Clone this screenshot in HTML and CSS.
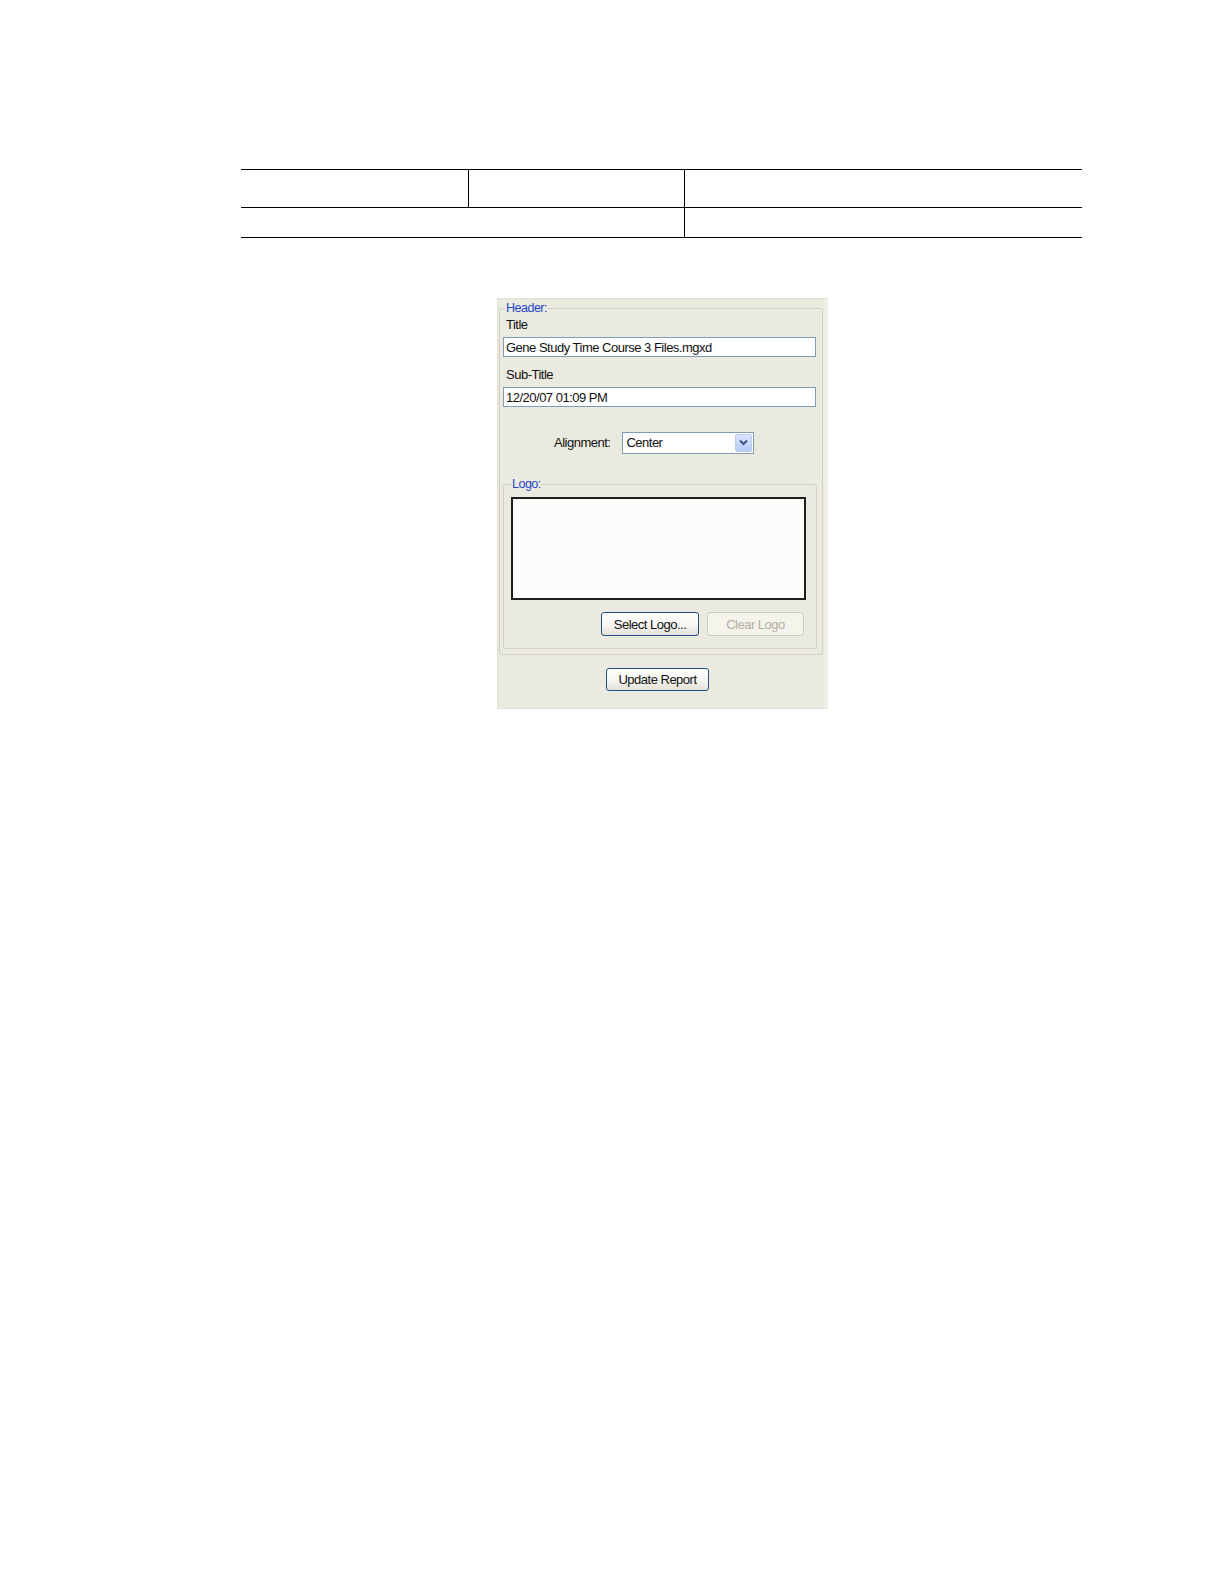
FILE: index.html
```html
<!DOCTYPE html>
<html lang="en">
<head>
<meta charset="utf-8">
<title>Report Header Settings</title>
<link rel="stylesheet" href="styles.css">
</head>
<body>
<div class="page">
  <div class="spec">
    <div class="cell"></div>
    <div class="cell vline"></div>
    <div class="cell vline"></div>
    <div class="cell row2 span2"></div>
    <div class="cell row2 vline"></div>
  </div>

  <div class="panel">
    <fieldset class="group header-group">
      <legend class="legend">Header:</legend>
      <div class="header-body">
        <label class="field-label" for="title">Title</label>
        <input class="text-input" id="title" type="text" value="Gene Study Time Course 3 Files.mgxd">
        <label class="field-label sub" for="subtitle">Sub-Title</label>
        <input class="text-input" id="subtitle" type="text" value="12/20/07 01:09 PM">
        <div class="align-row">
          <span class="align-label">Alignment:</span>
          <div class="combo">
            <span class="combo-text">Center</span>
            <span class="combo-btn">
              <svg width="9" height="7" viewBox="0 0 9 7"><path d="M1 1.5 L4.5 5 L8 1.5" fill="none" stroke="#3d5688" stroke-width="2"/></svg>
            </span>
          </div>
        </div>
        <fieldset class="group logo-group">
          <legend class="legend logo-legend">Logo:</legend>
          <div class="logo-body">
            <div class="logo-box"></div>
            <div class="logo-buttons">
              <button class="xp-btn select-btn" type="button">Select Logo...</button>
              <button class="xp-btn clear-btn" type="button" disabled>Clear Logo</button>
            </div>
          </div>
        </fieldset>
      </div>
    </fieldset>
    <div class="footer">
      <button class="xp-btn update-btn" type="button">Update Report</button>
    </div>
  </div>
</div>
</body>
</html>
```

FILE: styles.css
```css
html, body {
  margin: 0;
  padding: 0;
  background: #ffffff;
}

.page {
  padding-top: 169px;
  padding-left: 241px;
  font-family: "Liberation Sans", Arial, sans-serif;
}

.spec {
  display: grid;
  grid-template-columns: 227px 216px 398px;
  grid-template-rows: 37px 30px;
  width: 841px;
  border-top: 1px solid #000;
  border-bottom: 1px solid #000;
  box-sizing: content-box;
}

.cell {
  box-sizing: border-box;
}

.vline {
  border-left: 1px solid #000;
}

.row2 {
  border-top: 1px solid #000;
}

.span2 {
  grid-column: span 2;
}

/* dialog panel */
.panel {
  width: 331px;
  height: 411px;
  box-sizing: border-box;
  margin-top: 60px;
  margin-left: 256px;
  padding: 1px 4px 0 1px;
  background: #ebeae0;
  border: 1px solid #e2e0d4;
  border-right: 1px solid #f3f2ec;
  box-shadow: inset -3px 0 0 #f0efe7;
  font-size: 13px;
  letter-spacing: -0.5px;
  color: #111;
}

.group {
  margin: 0;
  padding: 0;
  border: 1px solid #d3d1c3;
  border-radius: 3px;
  min-width: 0;
}

.legend {
  margin-left: 5px;
  padding: 0 1px;
  font-size: 12.5px;
  line-height: 16px;
  color: #1f45c8;
}

.header-group {
  width: 324px;
  box-sizing: border-box;
}

.header-body {
  display: flex;
  flex-direction: column;
  align-items: flex-start;
  padding: 1px 6px 5px 3px;
}

.field-label {
  display: block;
  line-height: 16px;
  height: 16px;
  padding-left: 3px;
}

.field-label.sub {
  margin-top: 10px;
}

.text-input {
  display: block;
  margin: 4px 0 0 0;
  width: 313px;
  height: 20px;
  box-sizing: border-box;
  border: 1px solid #7f9db9;
  padding: 0 0 0 2px;
  background: #fff;
  font-family: inherit;
  font-size: 13px;
  letter-spacing: -0.5px;
  color: #111;
  outline: none;
}

.align-row {
  display: flex;
  align-items: center;
  gap: 12px;
  margin-top: 25px;
  padding-left: 51px;
  height: 21px;
}

.align-label {
  line-height: 16px;
}

.combo {
  display: flex;
  align-items: stretch;
  width: 132px;
  height: 22px;
  box-sizing: border-box;
  border: 1px solid #7f9db9;
  background: #fff;
  padding: 1px;
}

.combo-text {
  flex: 1;
  padding-left: 2px;
  line-height: 18px;
}

.combo-btn {
  width: 17px;
  display: flex;
  align-items: center;
  justify-content: center;
  background: linear-gradient(#dbe5fd, #b6cbf7);
  border: 1px solid #bccbee;
  border-radius: 2px;
  box-sizing: border-box;
}

.logo-group {
  margin-top: 23px;
  width: 314px;
  box-sizing: border-box;
}

.logo-legend {
  margin-left: 7px;
}

.logo-body {
  display: flex;
  flex-direction: column;
  align-items: stretch;
  padding: 5px 10px 12px 7px;
}

.logo-box {
  height: 103px;
  box-sizing: border-box;
  border: 2px solid #1e1e1e;
  background: #fbfbfa;
}

.logo-buttons {
  display: flex;
  justify-content: flex-end;
  gap: 8px;
  margin-top: 12px;
  margin-right: 2px;
}

.xp-btn {
  height: 24px;
  box-sizing: border-box;
  border: 1px solid #24508a;
  border-radius: 3px;
  background: linear-gradient(#ffffff, #f5f5f1 55%, #e3e0d6);
  font-family: inherit;
  font-size: 13px;
  letter-spacing: -0.5px;
  color: #111;
  padding: 0;
}

.select-btn {
  width: 98px;
}

.clear-btn {
  width: 97px;
  border-color: #cfcdbf;
  background: #f4f3ec;
  color: #b2afa2;
}

.footer {
  display: flex;
  margin-top: 13px;
  padding-left: 107px;
}

.update-btn {
  width: 103px;
  height: 23px;
}
```
